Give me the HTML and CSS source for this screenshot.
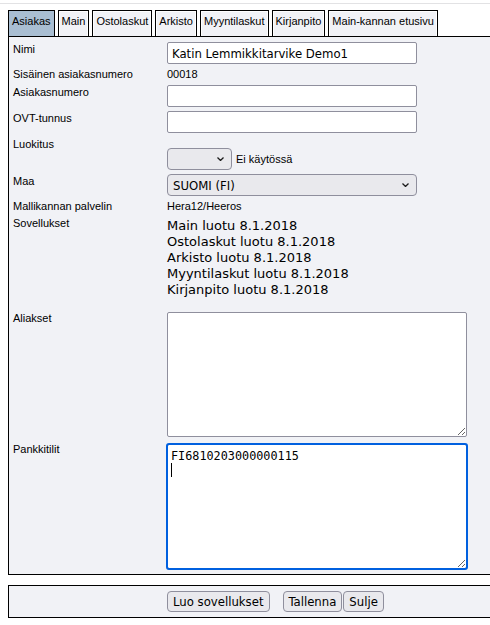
FILE: index.html
```html
<!DOCTYPE html>
<html lang="fi">
<head>
<meta charset="utf-8">
<title>Asiakas</title>
<link rel="stylesheet" href="styles.css">
</head>
<body>
<div class="topline"></div>
<div class="page">
  <nav class="tabs">
    <span class="tab active">Asiakas</span>
    <span class="tab">Main</span>
    <span class="tab">Ostolaskut</span>
    <span class="tab">Arkisto</span>
    <span class="tab">Myyntilaskut</span>
    <span class="tab">Kirjanpito</span>
    <span class="tab">Main-kannan etusivu</span>
  </nav>
  <div class="panel">
    <div class="form">
      <div class="lbl">Nimi</div>
      <div class="val"><input class="txt" type="text" value="Katin Lemmikkitarvike Demo1"></div>

      <div class="lbl flat">Sisäinen asiakasnumero</div>
      <div class="val plain">00018</div>

      <div class="lbl">Asiakasnumero</div>
      <div class="val"><input class="txt" type="text" value=""></div>

      <div class="lbl">OVT-tunnus</div>
      <div class="val"><input class="txt" type="text" value=""></div>

      <div class="lbl">Luokitus</div>
      <div class="val luokitus">
        <span class="sel small">
          <select><option></option></select>
          <svg class="chev" width="7" height="4" viewBox="0 0 7 4"><polyline points="0.5,0.5 3.5,3.5 6.5,0.5" fill="none" stroke="#1b1b1b" stroke-width="1.3"/></svg>
        </span>
        <span class="note">Ei käytössä</span>
      </div>

      <div class="lbl">Maa</div>
      <div class="val">
        <span class="sel wide">
          <select><option>SUOMI (FI)</option></select>
          <svg class="chev" width="7" height="4" viewBox="0 0 7 4"><polyline points="0.5,0.5 3.5,3.5 6.5,0.5" fill="none" stroke="#1b1b1b" stroke-width="1.3"/></svg>
        </span>
      </div>

      <div class="lbl flat">Mallikannan palvelin</div>
      <div class="val plain">Hera12/Heeros</div>

      <div class="lbl flat">Sovellukset</div>
      <div class="val apps">
        <div>Main luotu 8.1.2018</div>
        <div>Ostolaskut luotu 8.1.2018</div>
        <div>Arkisto luotu 8.1.2018</div>
        <div>Myyntilaskut luotu 8.1.2018</div>
        <div>Kirjanpito luotu 8.1.2018</div>
      </div>

      <div class="lbl flat">Aliakset</div>
      <div class="val"><textarea class="area"></textarea></div>

      <div class="lbl flat bank">Pankkitilit</div>
      <div class="val bank">
        <span class="areawrap">
          <textarea class="area focus">FI6810203000000115
</textarea>
          <span class="caret"></span>
        </span>
      </div>
    </div>
  </div>
  <div class="buttons">
    <button class="btn first" type="button">Luo sovellukset</button>
    <button class="btn" type="button">Tallenna</button>
    <button class="btn" type="button">Sulje</button>
  </div>
</div>
</body>
</html>
```

FILE: styles.css
```css
* {
  box-sizing: border-box;
}

html,
body {
  margin: 0;
  padding: 0;
  background: #ffffff;
}

body {
  font-family: "Liberation Sans", Arial, sans-serif;
  font-size: 11px;
  line-height: 13px;
  color: #000000;
  overflow: hidden;
}

.topline {
  height: 4px;
  border-bottom: 1px solid #e2e2e4;
}

.page {
  padding: 6px 0 0 8px;
}

/* tabs */
.tabs {
  display: flex;
  gap: 3px;
  height: 26px;
}

.tab {
  height: 26px;
  border: 1px solid #000000;
  border-bottom: 0;
  padding: 4px 3px 0;
  line-height: 13px;
  white-space: nowrap;
  background: #f1f2f6;
  box-shadow: inset 1px 1px 0 #ffffff, inset -1px 0 0 #ffffff;
}

.tab.active {
  background: #a9bed2;
  box-shadow: none;
}

/* main panel */
.panel {
  background: #f1f2f6;
  border: 1px solid #000000;
  border-right: 0;
}

.form {
  display: grid;
  grid-template-columns: 154px 1fr;
  row-gap: 4px;
  padding: 5px 0 5px 4px;
}

.lbl {
  padding-top: 1px;
  white-space: nowrap;
}

.lbl.flat {
  padding-top: 0;
}

.val.plain {
  white-space: nowrap;
}

.val.luokitus {
  padding-top: 11px;
  display: flex;
  align-items: center;
}

.note {
  margin-left: 4px;
}

.val.apps {
  padding-top: 1px;
  margin-bottom: 10px;
  font-family: "DejaVu Sans", Verdana, sans-serif;
  font-size: 13px;
  line-height: 16px;
}

.bank {
  margin-top: 3px;
}

.lbl.bank {
  margin-top: 2px;
}

/* controls */
.txt {
  display: block;
  width: 250px;
  height: 22px;
  margin: 0;
  padding: 0 4px;
  border: 1px solid #8f8f9d;
  border-radius: 2px;
  background: #ffffff;
  color: #000000;
  font-family: "DejaVu Sans Condensed", "Liberation Sans", sans-serif;
  font-size: 13px;
}

.sel {
  position: relative;
  display: inline-block;
  vertical-align: top;
}

.sel select {
  -webkit-appearance: none;
  appearance: none;
  display: block;
  height: 22px;
  margin: 0;
  padding: 0 20px 0 5px;
  border: 1px solid #8f8f9d;
  border-radius: 4px;
  background: #e9e9ed;
  color: #000000;
  font-family: "DejaVu Sans Condensed", "Liberation Sans", sans-serif;
  font-size: 13px;
}

.sel.small select {
  width: 65px;
}

.sel.wide select {
  width: 250px;
}

.chev {
  position: absolute;
  right: 8px;
  top: 9px;
  pointer-events: none;
}

.sel.wide .chev {
  top: 9px;
}

.area {
  display: block;
  width: 300px;
  height: 125px;
  margin: 0;
  padding: 4px 3px;
  border: 1px solid #8f8f9d;
  border-radius: 2px;
  background: #ffffff;
  color: #000000;
  font-family: "DejaVu Sans Mono", "Liberation Mono", monospace;
  font-size: 11.8px;
  line-height: 14px;
  resize: both;
}

.area.focus {
  outline: 2px solid #0060df;
  outline-offset: -1px;
}

.areawrap {
  position: relative;
  display: block;
  width: 300px;
}

.caret {
  position: absolute;
  left: 4px;
  top: 19px;
  width: 1px;
  height: 14px;
  background: #000000;
}

/* button bar */
.buttons {
  margin-top: 10px;
  height: 33px;
  padding: 0 0 0 158px;
  display: flex;
  align-items: center;
  background: #f1f2f6;
  border: 1px solid #000000;
  border-right: 0;
}

.btn {
  height: 21px;
  margin: 0 0 0 1px;
  padding: 0 5px;
  border: 1px solid #8f8f9d;
  border-radius: 4px;
  background: #e9e9ed;
  color: #000000;
  font-family: "DejaVu Sans Condensed", "Liberation Sans", sans-serif;
  font-size: 13px;
  line-height: 17px;
}

.btn.first {
  margin: 0 12px 0 0;
}
```
